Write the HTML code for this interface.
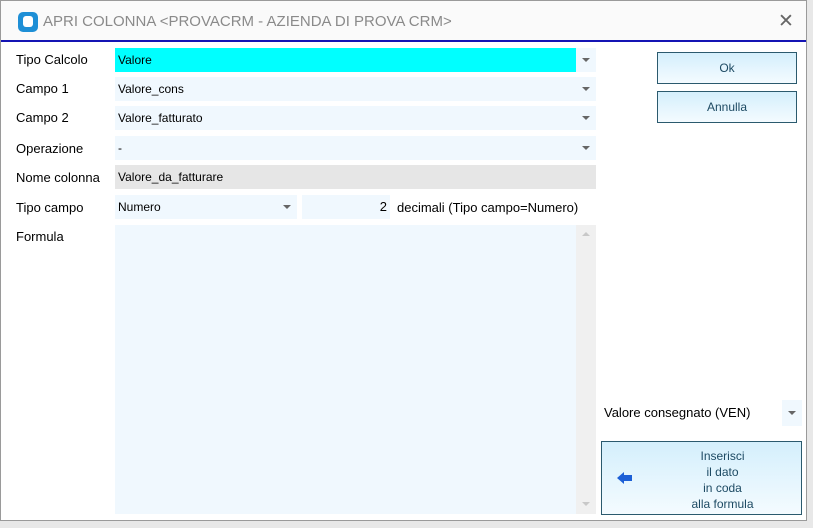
<!DOCTYPE html>
<html><head><meta charset="utf-8"><style>
*{margin:0;padding:0;box-sizing:border-box}
body{width:813px;height:528px;background:#e8e8e8;font-family:"Liberation Sans",Arial,sans-serif;position:relative;overflow:hidden}
.win{position:absolute;left:0;top:0;width:807px;height:521px;background:#fff;border:1px solid #9a9a9a}
.title{position:absolute;left:0;top:0;width:805px;height:41px;background:#fafafa;border-bottom:2px solid #1414b4}
.title .t{position:absolute;left:42px;top:12px;font-size:15px;color:#8a8a8a}
.logo{position:absolute;left:17px;top:11px;width:20px;height:20px;background:#1e8fd6;border-radius:5px}
.logo:after{content:"";position:absolute;left:5px;top:4px;width:10px;height:11px;background:#fff;border-radius:3px}
.x{position:absolute;left:777px;top:9px;font-size:19px;color:#666}
.lbl{position:absolute;left:16px;font-size:13px;color:#000}
.f{position:absolute;left:115px;width:481px;height:24px;background:#f0f8fe;font-size:12px;padding:5px 3px;color:#000}
.arr{position:absolute;width:0;height:0;border-left:4px solid transparent;border-right:4px solid transparent;border-top:4px solid #666}
.btn{position:absolute;border:1px solid #2b5a6e;background:linear-gradient(#d4effc,#f4fbff);color:#1d4a63;font-size:12px;text-align:center}
</style></head><body>
<div class="win">
<div class="title"><div class="logo"></div><div class="t">APRI COLONNA &lt;PROVACRM - AZIENDA DI PROVA CRM&gt;</div><div class="x">✕</div></div>
</div>
<div class="lbl" style="top:52px">Tipo Calcolo</div>
<div class="f" style="top:48px;background:#f0f8fe"><div style="position:absolute;left:0;top:0;width:461px;height:24px;background:#00ffff"></div><span style="position:relative">Valore</span><div class="arr" style="left:467px;top:10px"></div></div>
<div class="lbl" style="top:81px">Campo 1</div>
<div class="f" style="top:77px">Valore_cons<div class="arr" style="left:467px;top:10px"></div></div>
<div class="lbl" style="top:110px">Campo 2</div>
<div class="f" style="top:106px">Valore_fatturato<div class="arr" style="left:467px;top:10px"></div></div>
<div class="lbl" style="top:141px">Operazione</div>
<div class="f" style="top:136px">-<div class="arr" style="left:467px;top:10px"></div></div>
<div class="lbl" style="top:170px">Nome colonna</div>
<div class="f" style="top:165px;background:#e6e6e6">Valore_da_fatturare</div>
<div class="lbl" style="top:200px">Tipo campo</div>
<div class="f" style="top:195px;width:182px">Numero<div class="arr" style="left:168px;top:10px"></div></div>
<div class="f" style="top:195px;left:302px;width:88px;text-align:right;font-size:13px;padding:4px 3px">2</div>
<div style="position:absolute;left:397px;top:200px;font-size:13px">decimali (Tipo campo=Numero)</div>
<div class="lbl" style="top:229px">Formula</div>
<div class="f" style="top:225px;height:289px"></div>
<div style="position:absolute;left:576px;top:225px;width:20px;height:289px;background:#f0f0f0"></div>
<div class="arr" style="left:582px;top:232px;border-top:none;border-bottom:4px solid #c8c8c8"></div>
<div class="arr" style="left:582px;top:502px;border-top-color:#c8c8c8"></div>
<div class="btn" style="left:657px;top:52px;width:140px;height:32px;line-height:30px">Ok</div>
<div class="btn" style="left:657px;top:91px;width:140px;height:32px;line-height:30px">Annulla</div>
<div style="position:absolute;left:604px;top:405px;font-size:13px">Valore consegnato (VEN)</div>
<div style="position:absolute;left:782px;top:400px;width:20px;height:26px;background:#f0f8fe"></div>
<div class="arr" style="left:788px;top:411px"></div>
<div class="btn" style="left:601px;top:441px;width:201px;height:74px;padding-top:6px;line-height:16px"><div style="margin-left:42px">Inserisci<br>il dato<br>in coda<br>alla formula</div></div>
<div style="position:absolute;left:617px;top:472px;width:0;height:0;border-top:6px solid transparent;border-bottom:6px solid transparent;border-right:7px solid #1c5fd6"></div>
<div style="position:absolute;left:623px;top:475px;width:9px;height:6px;background:#1c5fd6"></div>
</body></html>
